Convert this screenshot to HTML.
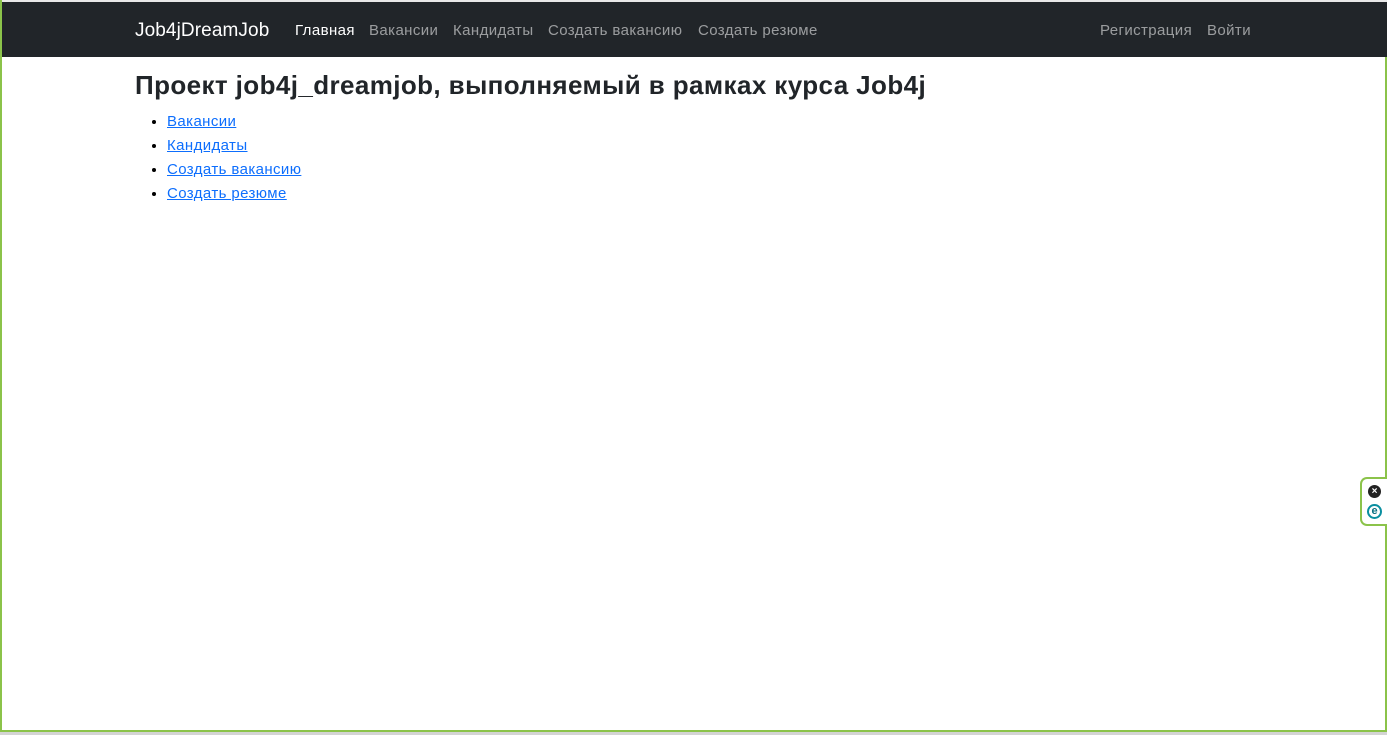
<!DOCTYPE html>
<html><head><meta charset="utf-8"><style>
*{margin:0;padding:0;box-sizing:border-box}
body{width:1387px;height:735px;overflow:hidden;background:#fff;font-family:"Liberation Sans","DejaVu Sans",sans-serif;position:relative}
.top{position:absolute;left:0;top:0;width:1387px;height:2px;background:#e8e8e8}
.nav{position:absolute;left:1px;top:2px;width:1386px;height:55px;background:#212529}
.nav span{position:absolute;top:20px;font-size:15px;color:rgba(255,255,255,.55);white-space:nowrap;letter-spacing:0.4px}
.brand{font-size:19px!important;color:#fff!important;top:18px!important;letter-spacing:0.1px!important}
.lb{position:absolute;left:0;top:0;width:2px;height:733px;background:#8bc34a}
.rb{position:absolute;left:1385px;top:57px;width:2px;height:676px;background:#8bc34a}
.bb{position:absolute;left:0;top:730px;width:1387px;height:2px;background:#8bc34a}
.gb{position:absolute;left:0;top:732px;width:1387px;height:3px;background:#d4d4d4}
h1{position:absolute;left:135px;top:70px;font-size:26px;font-weight:bold;color:#212529;white-space:nowrap;letter-spacing:0.4px}
ul{position:absolute;left:167px;top:110px;list-style:disc;font-size:15px;line-height:24px;letter-spacing:0.4px}
a{color:#0d6efd;text-decoration:underline}
.ext{position:absolute;left:1360px;top:477px;width:27px;height:49px;border:2px solid #8bc34a;border-right:none;border-radius:7px 0 0 7px;background:#fff}
.c1{position:absolute;left:6px;top:6px;width:13px;height:13px;border-radius:50%;background:#222;color:#fff;font-size:10px;line-height:13px;text-align:center;font-weight:bold}
.c2{position:absolute;left:5px;top:25px;width:15px;height:15px;border-radius:50%;border:2px solid #0a8fa0;color:#0a6f80;font-size:11px;line-height:11px;text-align:center;font-weight:bold}
</style></head><body>
<div class="top"></div>
<div class="nav">
<span class="brand" style="left:134px">Job4jDreamJob</span>
<span style="left:294px;color:#fff">Главная</span>
<span style="left:368px">Вакансии</span>
<span style="left:452px">Кандидаты</span>
<span style="left:547px">Создать вакансию</span>
<span style="left:697px">Создать резюме</span>
<span style="left:1099px">Регистрация</span>
<span style="left:1206px">Войти</span>
</div>
<h1>Проект job4j_dreamjob, выполняемый в рамках курса Job4j</h1>
<ul>
<li><a>Вакансии</a></li>
<li><a>Кандидаты</a></li>
<li><a>Создать вакансию</a></li>
<li><a>Создать резюме</a></li>
</ul>
<div class="lb"></div><div class="rb"></div><div class="bb"></div><div class="gb"></div>
<div class="ext"><div class="c1">×</div><div class="c2">e</div></div>
</body></html>
